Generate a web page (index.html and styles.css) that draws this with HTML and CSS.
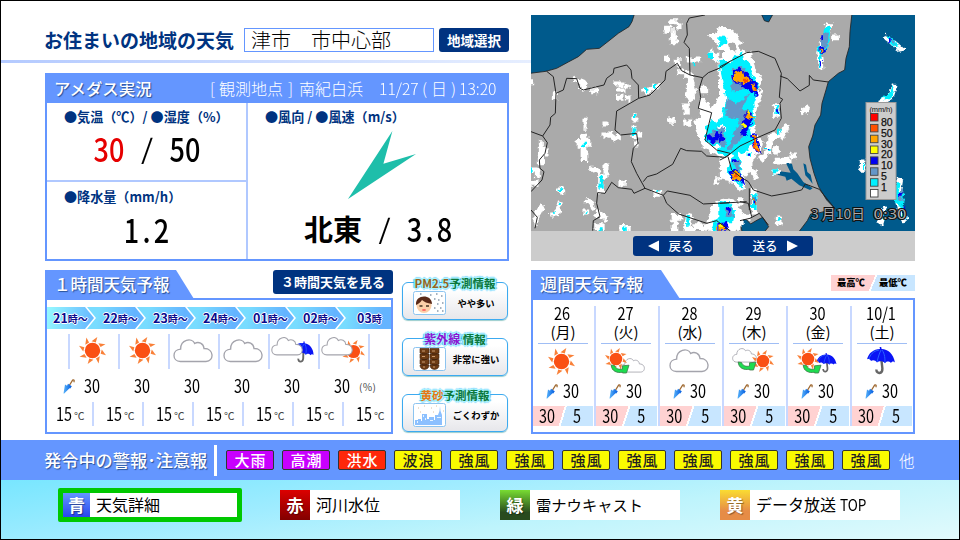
FILE: index.html
```html
<!DOCTYPE html>
<html lang="ja">
<head>
<meta charset="utf-8">
<title>お住まいの地域の天気</title>
<link rel="stylesheet" href="styles.css">
</head>
<body>
<svg class="defs" width="0" height="0" aria-hidden="true">
  <defs>
    <linearGradient id="drop" x1="0" y1="0" x2="1" y2="0"><stop offset="0" stop-color="#5ab4fa"/><stop offset="1" stop-color="#005ae0"/></linearGradient>
    <symbol id="sun" viewBox="-14 -14 28 28">
      <g fill="#f98038">
        <path id="r" d="M-1-9.6L5-14L3.4-8.4z" transform="rotate(0)"/>
        <use href="#r" transform="rotate(45)"/><use href="#r" transform="rotate(90)"/><use href="#r" transform="rotate(135)"/>
        <use href="#r" transform="rotate(180)"/><use href="#r" transform="rotate(225)"/><use href="#r" transform="rotate(270)"/><use href="#r" transform="rotate(315)"/>
      </g>
      <circle r="8" fill="#fa5014"/>
    </symbol>
    <symbol id="cloud" viewBox="-2 -2 120 71">
      <path d="M20 65C-5 65-6 29 21 28C20 0 54-9 63 11C74 4 90 10 91 26C122 25 122 65 97 65z" fill="#fff" stroke="#a4a4ac" stroke-width="4"/>
    </symbol>
    <symbol id="umb" viewBox="0 0 28 28">
      <path d="M14 9L15.4 21.500C15.600 27 9.500 27.500 9.300 22.500" fill="none" stroke="#666" stroke-width="2.400"/>
      <path d="M13 2L12.600 0H14.200L14.600 2C21 2 26.500 7 28 15.500C26.500 14 24.800 14.500 24 16C22 14 19 14.200 18 16.200C16 13.800 12 13.800 10 15.500C8.500 13 5.500 12.500 4 14C3 12 1 11.500 0 12.500C1.500 6 6.500 2.200 13 2z" fill="#0a14f5"/>
      <path d="M12 3C6 4 3 8 2 12M14 3C12 7 11 11 10 15M15 3C18 7 18 12 18 16" fill="none" stroke="#2a62ff" stroke-width="1"/>
    </symbol>
    <symbol id="closed" viewBox="0 0 12 15">
      <path d="M6 7L9.300 1.600C10.300.200 11.800 1 10.800 3.200" fill="none" stroke="#a06a32" stroke-width="1.300"/>
      <path d="M.500 14.500L2 5.500L4 6.800L5 4.800L8.800 7.300L7.300 9.500L6.500 9.300L1.200 14.500z" fill="url(#drop)"/>
    </symbol>
    <symbol id="turn" viewBox="0 0 20 10">
      <path d="M1.200 1L4.500 1.500C6 5 9 5.800 12.500 5V1.800L19 1.200L16.500 9H12.500V8.200C7 9.500 1.500 7 1.200 1z" fill="#1edc50" stroke="#3c7848" stroke-width=".8"/>
    </symbol>
    <filter id="rough" x="0" y="0" width="100%" height="100%" filterUnits="objectBoundingBox" color-interpolation-filters="sRGB">
      <feTurbulence type="fractalNoise" baseFrequency=".2" numOctaves="2" seed="4"/>
      <feDisplacementMap in="SourceGraphic" scale="7" xChannelSelector="R" yChannelSelector="G"/>
    </filter>
  </defs>
</svg>

<div class="screen">
  <main class="main">
    <section class="left">
      <header class="head">
        <h1>お住まいの地域の天気</h1>
        <div class="place">津市　市中心部</div>
        <button class="btn pick">地域選択</button>
      </header>

      <section class="amedas">
        <div class="amedas-head">
          <h2>アメダス実況</h2>
          <div class="stamp"><span class="w9">[</span><span class="w68">観測地点</span><span class="w12">]</span><span class="w80">南紀白浜</span><span class="w43 nar">11/27</span><span class="w9">(</span><span class="w20">日</span><span class="w8">)</span><span class="w41 nar">13:20</span></div>
        </div>
        <div class="amedas-body">
          <div class="stack">
            <div class="box temp">
              <h3>●気温（℃）/ ●湿度（%）</h3>
              <div class="big"><span class="c red">30</span><span class="c s">/</span><span class="c">50</span></div>
            </div>
            <div class="box rain">
              <h3>●降水量（mm/h）</h3>
              <div class="big"><span class="c one">1</span><span class="c one">.</span><span class="c one">2</span></div>
            </div>
          </div>
          <div class="box wind">
            <h3>●風向 / ●風速（m/s）</h3>
            <svg class="needle" width="68" height="68" viewBox="0 0 68 68"><path d="M44.400 0L35.400 32.700L68 23L0 68z" fill="#1ebeaa"/></svg>
            <div class="big"><span class="dir">北東</span><span class="c s2">/</span><span class="c one">3</span><span class="c one">.</span><span class="c one">8</span></div>
          </div>
        </div>
      </section>

      <div class="lower">
        <section class="hourly">
          <div class="tabrow"><h2 class="tab t1">１時間天気予報</h2><button class="btn three">３時間天気を見る</button></div>
          <div class="panel">
            <div class="band"><span>21<i>時～</i></span><span>22<i>時～</i></span><span>23<i>時～</i></span><span>24<i>時～</i></span><span>01<i>時～</i></span><span>02<i>時～</i></span><span>03<i>時</i></span></div>
            <div class="icons">
              <div><svg width="27" height="27"><use href="#sun"/></svg></div>
              <div><svg width="27" height="27"><use href="#sun"/></svg></div>
              <div><svg width="40" height="24"><use href="#cloud"/></svg></div>
              <div><svg width="40" height="24"><use href="#cloud"/></svg></div>
              <div><svg width="46" height="30"><use href="#umb" x="22" y="4" width="22" height="25" transform="rotate(8 33 16)"/><use href="#cloud" x="1" y="1" width="32" height="19"/></svg></div>
              <div><svg width="46" height="30"><use href="#sun" x="22" y="4" width="23" height="23"/><use href="#cloud" x="1" y="1" width="32" height="19"/></svg></div>
              <div class="end"></div>
            </div>
            <div class="pct">
              <svg width="12" height="15"><use href="#closed"/></svg>
              <b>30</b><b>30</b><b>30</b><b>30</b><b>30</b><b>30</b><small>(％)</small>
            </div>
            <div class="temps"><span><b>15</b><i>℃</i></span><span><b>15</b><i>℃</i></span><span><b>15</b><i>℃</i></span><span><b>15</b><i>℃</i></span><span><b>15</b><i>℃</i></span><span><b>15</b><i>℃</i></span><span><b>15</b><i>℃</i></span></div>
          </div>
        </section>

        <nav class="info">
          <div class="card"><div class="cap"><em class="brown">PM2.5</em><em>予測情報</em></div>
            <div class="row"><svg width="33" height="24" viewBox="0 0 33 24"><rect x=".500" y=".500" width="32" height="23" rx="2" fill="#fff" stroke="#8cc4f0"/><ellipse cx="11" cy="14.500" rx="7.500" ry="7.500" fill="#fcd0a8"/><path d="M3 14C2 3 19 3 19 13C14 12 11 11 9 9C7 12 5 13 3 14z" fill="#5a2a18"/><path d="M6.500 15h3M13 15h3" stroke="#432" stroke-width="1.300"/><ellipse cx="11" cy="19" rx="2" ry="1" fill="#f66"/><path d="M17 4h1.500M23 3h1.500M28 5h1.500M21 8h1.500M25 9h1.500M29 12h1.500M24 13h1.500M21 17h1.500M27 17h1.500M24 20h1.500M29 20h1.500M7 3h1.500" stroke="#89a" stroke-width="1.500"/></svg><p>やや多い</p></div></div>
          <div class="card"><div class="cap"><em class="violet">紫外線</em> <em>情報</em></div>
            <div class="row"><svg width="33" height="24" viewBox="0 0 33 24"><rect x=".500" y=".500" width="32" height="23" rx="2" fill="#fff" stroke="#8cc4f0"/><g fill="#6e3c14" stroke="#3c1e0a" stroke-width=".6"><path d="M7 1.500h9v4.500q-5 2.500-9 0zM17 1.500h9v4.500q-4 2.500-9 0zM7 7h9v4.500q-5 2.500-9 0zM17 7h9v4.500q-4 2.500-9 0zM7 12.500h9v4.500q-5 2.500-9 0zM17 12.500h9v4.500q-4 2.500-9 0zM7 18h9q0 4-4.500 4.500q-4.500-.500-4.500-4.500zM17 18h9q0 4-4.500 4.500q-4.500-.500-4.500-4.500z"/></g><path d="M9 4h3M19 4h3M9 9.500h3M19 9.500h3M9 15h3M19 15h3M10 20h2M20 20h2" stroke="#c89a70" stroke-width="1.200"/></svg><p>非常に強い</p></div></div>
          <div class="card"><div class="cap"><em class="orange">黄砂</em><em>予測情報</em></div>
            <div class="row"><svg width="33" height="24" viewBox="0 0 33 24"><rect x=".500" y=".500" width="32" height="23" rx="2" fill="#fff" stroke="#8cc4f0"/><path d="M2 22V17h3v-1h3v2h1v-7h5v5h2v-2h5v3h1v-5h3l1.500-4l.500-5l.500 5l1.500 4v10z" fill="#8cc0ff"/><path d="M10 12h1v2h-1zM12 15h1v2h-1zM17 17h3v1h-3zM4 18h1v2h-1zM24 14h4v1h-4z" fill="#e6f4ff"/><path d="M5 5h1M11 3h1M18 5h1M23 3h1M20 9h1M7 9h1M30 8h1" stroke="#d8c0a0"/></svg><p>ごくわずか</p></div></div>
        </nav>
      </div>
    </section>

    <section class="right">
      <div class="radar">
        <svg width="384" height="216" viewBox="0 0 384 216">
          <rect width="384" height="216" fill="#aaa"/>
          <g fill="#005a8c" stroke="#222" stroke-width="2.500">
            <path transform="translate(-1 -5) scale(.3333)" d="M0 10H314L306 35L297 50L265 70L240 90L208 115L170 118L145 140L115 156L80 175L48 184L0 190z"/>
            <g transform="translate(189 -5) scale(.3333)">
              <path d="M396 10L390 65L388 110L378 145L374 180L355 190L325 215L318 240L306 280L302 315L285 345L278 378L266 410L270 445L282 490L296 530L320 570L345 596L300 608L272 612L262 632L237 665H590V10z"/>
              <path d="M125 14L133 32L146 36L158 14zM60 632L78 628L92 642L112 630L128 622L146 650L134 665H66z"/>
              <path stroke="none" d="M196 455L216 462L220 478L232 490L250 516L278 535L270 540L238 526L214 506L200 512L196 500L172 494L180 484L212 488zM250 460L258 464L262 486L272 494L278 522L266 506L256 496z"/>
            </g>
          </g>
          <g filter="url(#rough)">
            <rect width="384" height="216" fill="none"/>
            <g transform="translate(-1 -5) scale(.3333)">
              <g fill="none" stroke="#fff" stroke-width="15" stroke-linecap="square" stroke-linejoin="bevel">
                <path d="M425 35h15M410 55h4M448 48h2M430 68v15M427 95h10M408 60v4M410 145v4M445 155v8M475 150h28M450 185h2M470 190v6"/>
                <path d="M480 200l10 50l-18 0l10 18M480 215v26M520 240h8M470 290v14M470 338h4M424 332h1" stroke-width="19"/>
                <path d="M260 222h16M268 240h8M281 245M292 228v3M268 262h2M292 264h2M135 210l30 12l-6 14M188 242h6M345 240l16-4M352 248l22-18h10"/>
                <path d="M315 315v12M312 355v22M325 375h4M318 402v3M165 334v18M225 342h3M222 375h18l16 12M265 380v3"/>
                <path d="M162 378v68M150 400h24" stroke-width="20"/>
                <path d="M34 398v60M45 415v14M3 215h2M76 252v8M10 480h12v16M6 520h12M86 540h12v6M90 580l-10 32h-12M185 475h5l14 10M228 465v34M212 500v42M175 575h10l4 16M155 628M270 520h10M375 550h14M35 590l-10 20h-7v30M18 655M165 606h2"/>
                <path d="M205 612l18 10M200 650h14M278 655h14M435 625v34M478 620l-8 40h16M505 640M432 622h12M500 650h12" stroke-width="20"/>
              </g>
              <path fill="#fff" d="M534 72h20l12-18h28l10 10v82h-20v12h-30l-18-22l6-18l14 10h20l-16-24zM600 155L580 190L570 250L545 295L520 262L505 268L510 318L490 334L502 366L512 400L530 420L580 440L590 470V505H555L550 520L605 540V152zM520 662L540 600L560 572L605 560V662z"/>
              <g fill="#00f0ff"><path d="M562 82l22 2l16 8v16h-24l-14-10zM537 128h12v16h-12zM600 165L588 200L582 260L588 320L560 340L545 325L528 355L522 385L538 402L580 412L600 440zM568 576l32-4v66l-24-8zM590 450h10v50l-12-12zM555 630l14-8l30 40h-54z"/>
              <path d="M485 156h8v10h-8zM345 232h10v12h-10zM372 222h8v14h-8zM305 355h14v20h-14zM312 310h10v14h-10zM158 395h10v14h-10zM210 500h10l-2 36h-10zM86 538h10v8h-10zM86 578h6v10h-6zM72 600h8v8h-8zM164 604h6v8h-6zM3 472h5v16h-5zM470 615h10l-4 35h-8zM280 650h10v12h-10zM206 655h12v7h-12zM380 540h8v8h-8z"/></g>
              <path fill="#6496c8" d="M535 372l24-12l18 6l24 20v30l-26-12l-30-8zM590 260l10-10v60l-10-14zM575 600l20-8v30h-16z"/>
              <path fill="#0000f0" d="M532 378l22-4l6-12l20 12l-8 18l-32 6zM585 600h15v14h-15zM565 640l12-12l23 34h-30z"/>
              <path fill="#ffa500" d="M560 650l8-8l6 6l8-6l8 10l10-4v14h-40z"/>
            </g>
            <g transform="translate(189 -5) scale(.3333)">
              <path fill="#fff" d="M-5 60L30 54L52 70L62 98L60 125L95 122L105 175L128 205L118 235L128 250L112 300L102 330L108 370L132 395L122 425L96 440L95 480L72 500L78 535L60 545L30 510L0 520zM-5 570L40 568L60 590L75 620L58 662H-5z"/>
              <g fill="none" stroke="#fff" stroke-linecap="square" stroke-linejoin="bevel" stroke-width="17">
                <path d="M325 50l-8 40l-20 35l4 45M345 82h6M170 288v24M175 310M198 350l-12 26l-34 4M150 390l-6 36l-18 18M168 420v5M250 305l8-6M220 436h2M190 452l-20 0M165 486h6M200 452h3M92 440v30l14 30M102 545v60M62 570v8M176 628v10M500 85l20 14l22 18M522 232l-10 30l-26 12M530 325M428 460v14M540 515l-8 50l12 50M490 600l-10 34M545 600l8 30M88 620h-10"/>
              </g>
              <path fill="#aaa" d="M24 106l10-12l12 8l4 18l-20 4zM-5 508l30 4l26 34l8 22l-64-4zM-5 120h14v22h-14z"/>
              <path fill="#00f0ff" d="M-5 82L22 84L22 100L-5 110zM-5 150L30 160L40 140L66 128L74 150L90 160L96 190L118 232L110 260L100 290L104 340L90 360L98 395L82 420L56 430L62 462L70 540L52 520L20 490L40 430L10 440L-5 420L18 360L-5 340L20 270L10 220zM-5 575L30 580L45 600L36 640H-5zM312 54l18-4l-2 46l-16 38l-12 14l2 26l-8-2l4-36l-8-22l16-8zM504 76l18 12l14 22l-20-4l-12-14zM518 228l6 12l-10 28h-34l28-16zM166 288h10v24h-10zM176 356l10 4l-10 14zM138 414h14v14h-14zM158 478h12v12h-12zM96 550h14v50h-14zM172 624h10v8h-10zM528 520h14l-6 20l20 16l-8 26l10 50l-20-40l-18-20zM426 462h6v12h-6zM80 430h14v10h-14zM486 606h12l-10 28z"/>
              <path fill="#6496c8" d="M38 175L70 170L90 200L85 230L50 250L34 235zM20 260L50 285L92 245L65 300L100 310L80 370L50 400L22 430L35 390L60 330L16 316zM-5 350L14 360L18 410L-5 405zM14 592L38 590V620L18 616zM310 66l14 2l-4 44l-18 16zM506 82l20 10v14zM36 450l20 0l10 60zM536 540h14v30l-14 4z"/>
              <path fill="#0000f0" d="M36 188L56 174L70 180L112 222L116 256L100 250L60 222L42 220zM72 320L82 300L98 312L92 345L76 385L62 376zM90 376L110 372L122 430L104 420zM-5 375L8 365L14 390L-2 400zM24 486L50 476L68 500L72 526L60 518L34 506zM16 590L34 596L26 610zM300 108h12l6 16l-8 12l-12-8zM304 76h8v12h-8zM297 154h6v12h-6zM140 416h8v8h-8zM168 298h6v10h-6zM84 434h6v6h-6zM98 560h8v20h-8zM504 84h8v14h-8zM534 546h14v14h-14zM-5 640L20 636L28 662H-5zM38 448h12v8h-12zM548 590h8v20h-8z"/>
              <path fill="#ffa500" d="M42 192L68 182L72 196L92 208L88 220L60 220L42 212zM92 218L104 222L112 250L100 242zM74 318L86 304L90 316L100 318L96 328L80 322zM96 380L106 376L112 400L118 426L106 418zM32 490L52 482L66 504L62 516L38 504zM302 116h8v14h-8zM98 560h6v12h-6zM-2 648L14 644L18 660H-2z"/>
              <path fill="#ff5000" d="M66 206h18v10h-18zM104 230h5v14h-5zM96 384l8-4l4 24l6 18l-8-4zM40 492h14v10h-14zM102 572h5v14h-5z"/>
              <path fill="#ff0" d="M66 346l10-6l2 10l-8 8zM80 304h6v8h-6zM-2 642h6v8h-6z"/>
            </g>
          </g>
          <g fill="none" stroke="#222" stroke-width="3" stroke-linejoin="round">
            <path transform="translate(-1 -5) scale(.3333)" d="M50 184L70 200L78 250L76 310L62 322L60 345L38 378L52 398L45 430L28 450L30 475L42 485L36 510L3 545M3 365L38 378M78 250L100 240L110 205L140 206L150 235L160 240L222 225L230 205L250 190L252 175L290 165L303 180L306 205L325 225L326 265L260 303L255 360L272 375L320 370L324 400L310 415L304 455L320 490L345 535L312 550L305 538L265 533L245 517L225 550L203 548L200 580L210 620L190 632L188 662M525 15L478 24L470 40L472 75L462 97L478 115L480 195L518 203L535 188L575 172L600 154M326 265L360 255L405 210L408 184L442 160L455 182L480 195M518 203L508 235L512 262L505 295L545 308L525 390L560 420L600 430M340 515L352 500L380 492L428 463L452 415L470 422L515 424L530 438L585 442L600 432M345 535L400 556L412 543L480 556L520 582L600 578M400 556L410 580L446 612L530 640L560 632L600 662M3 600L22 622L15 655"/>
            <path transform="translate(189 -5) scale(.3333)" d="M0 170L80 128L115 124L165 145L184 190L178 262L188 268L180 280L184 325L165 360L110 384L60 408L20 440L0 450M180 198L202 206L240 243L268 226L268 196L280 210L325 216M24 440L35 480L60 500L85 515L100 540L155 558L210 548L245 540L256 522L298 538L345 596M95 620L85 580L60 575M88 535L88 600M0 580L80 575M60 632L90 625L118 610L145 645"/>
          </g>
          <g transform="translate(334.500 87)">
            <rect x=".500" y=".500" width="30" height="97" fill="#ccc" stroke="#999"/>
            <g font-family="Liberation Sans" font-size="10.500" fill="#111" stroke="#111" stroke-width=".25">
              <text x="4" y="9.500" font-size="7.500" stroke="none" textLength="23">(mm/h)</text>
              <text x="15.500" y="23.700">80</text><text x="15.500" y="34.700">50</text><text x="15.500" y="45.700">30</text><text x="15.500" y="56.200">20</text><text x="15.500" y="67.200">10</text><text x="15.500" y="78.200">5</text><text x="15.500" y="88.700">1</text>
            </g>
            <g stroke="#444" stroke-width=".9">
              <rect x="5" y="11.500" width="7.500" height="7.500" fill="#f00"/><rect x="5" y="22.400" width="7.500" height="7.500" fill="#ff5000"/><rect x="5" y="33.200" width="7.500" height="7.500" fill="#ffa500"/><rect x="5" y="44" width="7.500" height="7.500" fill="#ff0"/><rect x="5" y="54.900" width="7.500" height="7.500" fill="#0000f0"/><rect x="5" y="65.800" width="7.500" height="7.500" fill="#6496c8"/><rect x="5" y="76.700" width="7.500" height="7.500" fill="#00f0ff"/><rect x="5" y="87.500" width="7.500" height="7.500" fill="#fff"/>
            </g>
          </g>
          <g font-family="Noto Sans CJK JP" font-size="13.500" fill="#aaa" stroke="#111" stroke-width="2" paint-order="stroke"><text x="280" y="203.500" textLength="54" lengthAdjust="spacingAndGlyphs">3 月10日</text><text x="342.500" y="203.500" textLength="33" lengthAdjust="spacingAndGlyphs">0:30</text></g>
        </svg>
        <div class="radar-nav">
          <button class="btn"><svg width="11" height="12"><path d="M11 .500V11.500L0 6z" fill="#fff"/></svg>戻る</button>
          <button class="btn">送る<svg width="11" height="12"><path d="M0 .500V11.500L11 6z" fill="#fff"/></svg></button>
        </div>
      </div>

      <section class="weekly">
        <div class="tabrow"><h2 class="tab t2">週間天気予報</h2><div class="legend"><span>最高℃</span><span>最低℃</span></div></div>
        <div class="panel days">
          <div class="day"><div class="date">26</div><div class="dow">(月)</div><div class="wx"><svg width="27" height="27"><use href="#sun"/></svg></div><div class="pop"><svg width="12" height="15"><use href="#closed"/></svg><b>30</b></div><div class="hl"><b>30</b><b>5</b></div></div>
          <div class="day"><div class="date">27</div><div class="dow">(火)</div><div class="wx"><svg width="42" height="28"><use href="#cloud" x="16" y="11" width="25" height="15"/><use href="#sun" x="1" y="1" width="22" height="22"/><use href="#turn" x="6" y="17" width="20" height="10"/></svg></div><div class="pop"><svg width="12" height="15"><use href="#closed"/></svg><b>30</b></div><div class="hl"><b>30</b><b>5</b></div></div>
          <div class="day"><div class="date">28</div><div class="dow">(水)</div><div class="wx"><svg width="40" height="24"><use href="#cloud"/></svg></div><div class="pop"><svg width="12" height="15"><use href="#closed"/></svg><b>30</b></div><div class="hl"><b>30</b><b>5</b></div></div>
          <div class="day"><div class="date">29</div><div class="dow">(木)</div><div class="wx"><svg width="42" height="28"><use href="#cloud" x="0" y="1" width="25" height="15"/><use href="#sun" x="20" y="3" width="22" height="22"/><use href="#turn" x="5" y="14" width="20" height="10"/></svg></div><div class="pop"><svg width="12" height="15"><use href="#closed"/></svg><b>30</b></div><div class="hl"><b>30</b><b>5</b></div></div>
          <div class="day"><div class="date">30</div><div class="dow">(金)</div><div class="wx"><svg width="42" height="28"><use href="#umb" x="20" y="6" width="21" height="20"/><use href="#sun" x="1" y="1" width="22" height="22"/><use href="#turn" x="6" y="17" width="20" height="10"/></svg></div><div class="pop"><svg width="12" height="15"><use href="#closed"/></svg><b>30</b></div><div class="hl"><b>30</b><b>5</b></div></div>
          <div class="day"><div class="date">10/1</div><div class="dow">(土)</div><div class="wx"><svg width="28" height="28"><use href="#umb"/></svg></div><div class="pop"><svg width="12" height="15"><use href="#closed"/></svg><b>30</b></div><div class="hl"><b>30</b><b>5</b></div></div>
        </div>
      </section>
    </section>
  </main>

  <section class="alerts">
    <h2>発令中の警報･注意報</h2>
    <ul>
      <li class="purple">大雨</li><li class="purple">高潮</li><li class="redbg">洪水</li><li>波浪</li><li>強風</li><li>強風</li><li>強風</li><li>強風</li><li>強風</li><li>強風</li><li>強風</li><li>強風</li>
    </ul>
    <span class="etc">他</span>
  </section>

  <footer class="keys">
    <div class="key on"><b class="kb">青</b><span>天気詳細</span></div>
    <div class="key"><b class="kr">赤</b><span>河川水位</span></div>
    <div class="key"><b class="kg">緑</b><span class="kana">雷ナウキャスト</span></div>
    <div class="key"><b class="ky">黄</b><span>データ放送 <i>TOP</i></span></div>
  </footer>
</div>
</body>
</html>
```

FILE: styles.css
```css
* { box-sizing: border-box; margin: 0; padding: 0; }
body { width: 960px; height: 540px; overflow: hidden; font-family: "Noto Sans CJK JP", sans-serif; color: #000; text-spacing-trim: space-all; }
h1, h2, h3, p, button { font: inherit; }
i, em { font-style: normal; }
svg { display: block; flex: none; }
.defs { position: absolute; }
.screen { width: 960px; height: 540px; border: 1px solid #000; background: #fff; display: flex; flex-direction: column; white-space: nowrap; }
.main { display: flex; height: 439px; }
.left { width: 530px; }
.right { width: 384px; padding-top: 14px; }

/* header */
.head { height: 62px; padding: 27px 0 0 43px; display: flex; align-items: flex-start; border-bottom: 3px solid; border-image: linear-gradient(90deg, #b4caff, #e6eeff) 1; }
.head h1 { width: 200px; font-size: 19px; font-weight: 700; line-height: 23px; color: #003380; }
.place { width: 190px; height: 24px; border: 1px solid #6496ff; padding-left: 6px; font-size: 20px; font-weight: 300; line-height: 21px; }
.btn { border: 0; border-radius: 3px; background: #003380; color: #fff; font-weight: 700; display: flex; align-items: center; justify-content: center; }
.pick { width: 70px; height: 24px; margin-left: 5px; font-size: 13.5px; padding-bottom: 1px; }

/* current observation */
.amedas { margin: 10px 0 0 44px; width: 464px; height: 188px; border: 2px solid #6496ff; border-top: 0; }
.amedas-head { height: 30px; margin: 0 -2px; background: #6496ff; color: #fff; display: flex; justify-content: space-between; padding: 0 9px; line-height: 30px; }
.amedas-head h2 { font-size: 16.400px; font-weight: 500; text-shadow: 1px 1px 1px #285096; }
.stamp { display: flex; font-size: 16px; font-weight: 300; }
.stamp span { flex: none; }
.nar { transform: scaleX(.98); transform-origin: 0 50%; }
.w8 { width: 8px; } .w9 { width: 9px; } .w12 { width: 12px; padding-left: 1px; } .w20 { width: 20px; } .w41 { width: 41px; } .w43 { width: 43px; } .w68 { width: 68px; } .w80 { width: 80px; }
.amedas-body { display: flex; height: 156px; }
.stack { width: 201px; border-right: 2px solid #b0c8ff; }
.box h3 { font-size: 13.100px; font-weight: 700; color: #003380; line-height: 18px; padding: 5px 0 0 17px; }
.temp { height: 79px; border-bottom: 2px solid #b0c8ff; }
.rain h3 { padding-top: 6px; }
.wind { width: 259px; }
.needle { margin: 5px 0 0 100px; }
.big { display: flex; font-size: 33px; font-weight: 500; height: 36px; line-height: 36px; }
.c { width: 30px; display: flex; justify-content: center; transform: scaleX(.82); flex: none; }
.c.s { width: 46px; font-size: 27px; font-weight: 400; transform: scaleX(1.15); }
.one { width: 15px; }
.red { color: #e60000; }
.temp .big { margin: 4px 0 0 47px; }
.rain .big { margin: 5px 0 0 77px; }
.wind .big { margin: 11px 0 0 56px; }
.dir { width: 58px; font-size: 29px; font-weight: 700; }
.c.s2 { width: 45px; font-size: 27px; font-weight: 400; transform: scaleX(1.15); }

/* shared panel */
.tabrow { height: 28px; display: flex; justify-content: space-between; }
.tab { height: 29px; background: #6496ff; color: #fff; font-weight: 500; line-height: 28px; padding-left: 9px; text-shadow: 1px 1px 1px #285096; }
.panel { border: 2px solid #6496ff; height: 136px; }
.t1 { width: 149px; font-size: 16.500px; clip-path: polygon(0 0, 131px 0, 149px 100%, 0 100%); }
.t2 { width: 149px; font-size: 17.200px; clip-path: polygon(0 0, 130px 0, 149px 100%, 0 100%); }

/* hourly forecast */
.lower { display: flex; margin: 9px 0 0 44px; }
.hourly { width: 348px; }
.three { width: 120px; height: 24px; font-size: 13px; padding-bottom: 1px; }
.band { margin-top: 7px; height: 22px; display: flex; }
.band span { width: 57px; margin-left: -7px; padding-left: 16px; flex: none; font-size: 12.500px; font-weight: 700; line-height: 21px; color: #0a0a8c; text-shadow: 1px 0 #fff, -1px 0 #fff, 0 1px #fff, 0 -1px #fff; background: linear-gradient(100deg, #78dcff 20%, #64b4ff 80%); clip-path: polygon(0 0, 48px 0, 57px 50%, 48px 100%, 0 100%, 9px 50%); }
.band span:first-child { width: 47px; margin: 0; padding-left: 6px; background: linear-gradient(100deg, #96faff, #64b4ff); clip-path: polygon(0 0, 38px 0, 47px 50%, 38px 100%, 0 100%); }
.band span:last-child { width: 54px; padding-left: 20px; clip-path: polygon(0 0, 100% 0, 100% 100%, 0 100%, 9px 50%); }
.band i { font-size: 10px; }
.icons { display: flex; margin: 5px 0 0 21px; height: 35px; }
.icons div { width: 50px; border-left: 2px solid #c8d8ff; display: flex; align-items: center; justify-content: center; padding: 0 3px 2px 0; }
.icons .end { width: 2px; padding: 0; }
b { font-weight: 400; }
.pct { display: flex; height: 18px; margin-top: 8px; padding-left: 16px; line-height: 17px; font-size: 18px; }
.pct svg { margin-top: 2px; }
.pct b { width: 50px; flex: none; transform: scaleX(.8); transform-origin: 0 50%; position: relative; left: 9px; }
.pct small { font-size: 10px; color: #444; margin-left: -16px; line-height: 20px; }
.temps { display: flex; margin-top: 7px; height: 24px; line-height: 23px; font-size: 18px; }
.temps span { width: 50px; flex: none; display: flex; padding-left: 9px; background: linear-gradient(#c8d8ff, #c8d8ff) 45px 0 / 2px 100% no-repeat; }
.temps span:last-child { width: 44px; background: none; }
.temps b { width: 18px; transform: scaleX(.8); transform-origin: 0 50%; }
.temps i { font-size: 10.500px; color: #444; line-height: 27px; }

/* information cards */
.info { margin: 6px 0 0 9px; width: 106px; display: flex; flex-direction: column; gap: 12px; }
.card { height: 44px; background: linear-gradient(#fff 20%, #e6e6ea) 0 6px / 100% 38px no-repeat; border-radius: 7px; position: relative; }
.card::before { content: ""; position: absolute; inset: 6px 0 0; border: 1.500px solid #3caaf0; border-radius: 6px; box-shadow: 0 1px 1px #9cc; }
.cap { position: relative; height: 15px; line-height: 14px; font-size: 11.500px; font-weight: 700; text-align: center; color: #0a783c; text-shadow: 1px 1px #aaf5ff, -1px 1px #aaf5ff, 1px -1px #aaf5ff, -1px -1px #aaf5ff, 2px 0 1px #32b4f0, -2px 0 1px #32b4f0, 0 2px 1px #8cdcff, 0 -2px 1px #8cdcff; }
.cap .brown { color: #96641e; } .cap .violet { color: #8c14d2; font-size: 12px; } .cap .orange { color: #e67814; }
.row { position: relative; display: flex; padding-left: 11px; }
.row p { width: 60px; font-size: 9.300px; font-weight: 700; line-height: 24px; text-align: center; }

/* radar */
.radar { height: 246px; background: #ccc; overflow: hidden; }
.radar-nav { display: flex; gap: 20px; padding: 5px 0 0 102px; }
.radar-nav .btn { width: 80px; height: 20px; font-size: 12.500px; gap: 9px; padding: 0 4px 1px 0; font-weight: 500; }
.radar-nav .btn:last-child { padding: 0 0 1px 4px; }

/* weekly forecast */
.weekly { margin-top: 9px; }
.legend { display: flex; margin-top: 5px; width: 84px; height: 16px; background: linear-gradient(113deg, #ffd2d2 49%, #fff 49%, #fff 51%, #c8e6ff 51%); font-size: 9.300px; font-weight: 900; line-height: 15px; }
.legend span { width: 44px; padding-left: 6px; }
.days { display: flex; padding-top: 6px; }
.day { width: 64px; height: 120px; flex: none; border-left: 2px solid #c8d8ff; text-align: center; }
.day:first-child { width: 61px; border: 0; }
.day:last-child { width: 63px; }
.date { height: 18px; line-height: 14px; font-size: 17px; transform: scaleX(.85); margin-right: 3px; }
.dow { width: 50px; height: 20px; line-height: 15px; font-size: 15px; border-bottom: 1px solid #a0bef5; margin: 0 6px 0 5px; }
.wx { height: 34px; display: flex; align-items: center; justify-content: center; margin-right: 4px; }
.pop { height: 28px; display: flex; padding: 4px 0 0 13px; line-height: 16px; font-size: 18px; }
.pop b { transform: scaleX(.8); transform-origin: 0 50%; margin-left: 5px; }
.pop svg { margin-top: 2px; }
.hl { height: 20px; display: flex; font-size: 18px; line-height: 18px; background: linear-gradient(108deg, #ffd2d2 48%, #fff 48%, #fff 51%, #c8e6ff 51%); margin-right: 1px; }
.hl b { width: 30px; transform: scaleX(.8); }
.hl b + b { width: 34px; }

/* warnings */
.alerts { height: 40px; background: #6496ff; display: flex; align-items: center; padding-left: 43px; color: #fff; }
.alerts h2 { width: 173px; height: 31px; line-height: 29px; font-size: 17.200px; font-weight: 500; text-shadow: 1px 1px 1px #285096; border-right: 3px solid #fff; }
.alerts ul { display: flex; gap: 8px; list-style: none; margin-left: 9px; }
.alerts li { width: 48px; height: 20px; border: 1px solid #333; border-radius: 2px; background: #fafa00; color: #222; font-size: 15px; line-height: 17px; letter-spacing: 1px; text-align: center; font-weight: 500; padding-left: 1px; }
.alerts li.purple { background: #c800ff; color: #fff; }
.alerts li.redbg { background: #ff280a; color: #fff; }
.etc { margin-left: 9px; font-size: 15.500px; font-weight: 300; line-height: 38px; }

/* colour keys */
.keys { height: 59px; display: flex; gap: 40px; padding: 10px 0 0 59px; background: linear-gradient(172deg, #78e6ff, #a0ecff 35%, #bef4fc 60%, #e1fafc); }
.key { width: 180px; height: 30px; background: #fff; display: flex; line-height: 29px; }
.key b { width: 30px; text-align: center; color: #fff; font-size: 17px; font-weight: 700; text-shadow: 1px 1px 1px #0006; }
.key span { padding-left: 6px; font-size: 16px; }
.key .kana { font-size: 15.300px; }
.key i { display: inline-block; transform: scaleX(.85); transform-origin: 0 50%; }
.key.on { width: 184px; height: 34px; margin: -2px -2px 0; border: 5px solid #00c800; border-radius: 2px; line-height: 23px; }
.key.on b { width: 27px; }
.kb { background: linear-gradient(#6496ff, #2846f0); }
.kr { background: linear-gradient(#dc0000, #820000); }
.kg { background: linear-gradient(#78dc32, #284b1e 75%); }
.ky { background: linear-gradient(#fadc32, #e68c46 70%); }
```
